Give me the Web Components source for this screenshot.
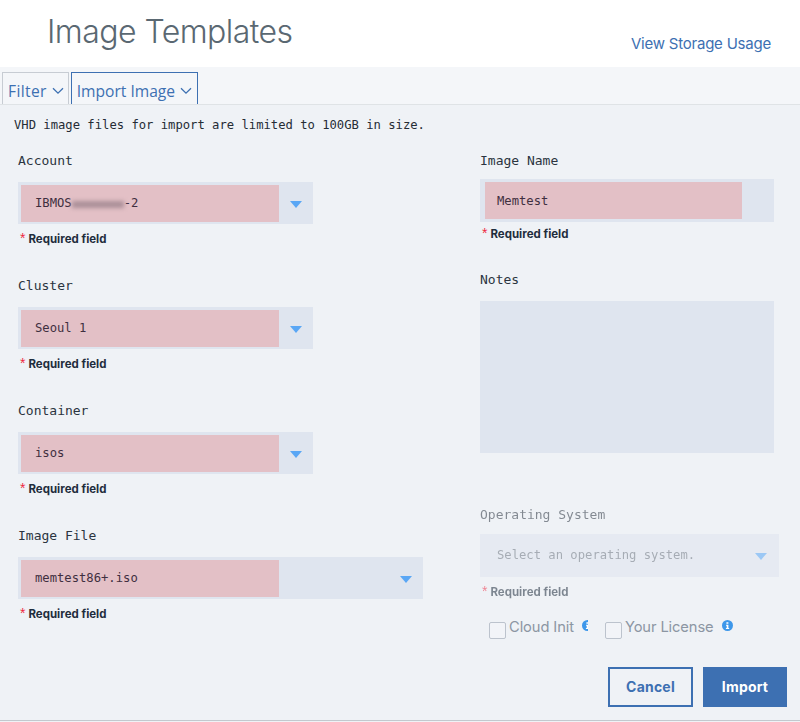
<!DOCTYPE html>
<html>
<head>
<meta charset="utf-8">
<title>Image Templates</title>
<style>
  html, body { margin: 0; padding: 0; background: #eff2f6; }
  body { width: 800px; height: 722px; overflow: hidden; }
</style>
</head>
<body>
<image-page>
  <page-header slot="header" link="View Storage Usage">Image Templates</page-header>
  <page-toolbar slot="toolbar">
    <tool-tab>Filter</tool-tab>
    <tool-tab active>Import Image</tool-tab>
  </page-toolbar>
  <span slot="note">VHD image files for import are limited to 100GB in size.</span>

  <form-field slot="left" label="Account" width="295" fill="258" arrow>IBMOS<blur-mark></blur-mark>-2</form-field>
  <form-field slot="left" label="Cluster" width="295" fill="258" arrow>Seoul 1</form-field>
  <form-field slot="left" label="Container" width="295" fill="258" arrow>isos</form-field>
  <form-field slot="left" label="Image File" width="405" fill="258" arrow>memtest86+.iso</form-field>

  <name-field slot="right" label="Image Name">Memtest</name-field>
  <notes-field slot="right" label="Notes"></notes-field>
  <os-field slot="right" label="Operating System">Select an operating system.</os-field>
  <check-row slot="right">
    <check-item clip>Cloud Init</check-item>
    <check-item>Your License</check-item>
  </check-row>
  <form-actions slot="right">
    <form-button>Cancel</form-button>
    <form-button primary>Import</form-button>
  </form-actions>
</image-page>

<script>
const SANS = '"Inter", "Liberation Sans", sans-serif';
const MONO = '"DejaVu Sans Mono", "Liberation Mono", monospace';

function define(name, html, extra) {
  const template = document.createElement('template');
  template.innerHTML = html;
  customElements.define(name, class extends HTMLElement {
    constructor() {
      super();
      this.attachShadow({ mode: 'open' });
      this.shadowRoot.appendChild(template.content.cloneNode(true));
    }
    connectedCallback() {
      if (extra) extra(this, this.shadowRoot);
    }
  });
}

define('image-page', `
  <style>
    :host { display: block; width: 800px; height: 722px; background: #eff2f6; box-sizing: border-box; }
    .note { height: 46px; box-sizing: border-box; padding: 12px 0 0 14px; font: 12.2px/17px ${MONO}; color: #252c35; white-space: pre; }
    .cols { display: grid; grid-template-columns: 462px 307px; padding-left: 18px; }
    .col { display: flex; flex-direction: column; }
    .end { height: 1px; background: #c3c8ce; margin-top: 13px; }
  </style>
  <slot name="header"></slot>
  <slot name="toolbar"></slot>
  <div class="note"><slot name="note"></slot></div>
  <div class="cols">
    <div class="col"><slot name="left"></slot></div>
    <div class="col"><slot name="right"></slot></div>
  </div>
  <div class="end"></div>
`);

define('page-header', `
  <style>
    :host { display: flex; justify-content: space-between; height: 67px; background: #fff; box-sizing: border-box; padding: 0 29px 0 47px; }
    h1 { margin: 11px 0 0; font: 300 32px/42px ${SANS}; color: #5a6872; letter-spacing: -0.55px; }
    a { margin-top: 34px; font: 400 15px/19px ${SANS}; color: #3d70b2; letter-spacing: -0.22px; }
  </style>
  <h1><slot></slot></h1>
  <a></a>
`, (el, root) => { root.querySelector('a').textContent = el.getAttribute('link'); });

define('page-toolbar', `
  <style>
    :host { display: flex; align-items: flex-end; gap: 2px; height: 38px; box-sizing: border-box; padding-left: 2px; background: #f4f6f9; border-bottom: 1px solid #dfe3e6; }
  </style>
  <slot></slot>
`);

define('tool-tab', `
  <style>
    :host { display: flex; align-items: center; gap: 5px; height: 32px; box-sizing: border-box; padding: 4px 4px 0 5px; border: 1px solid #c7ccd3; border-bottom: 0; font: 400 15.6px/20px "Open Sans", sans-serif; letter-spacing: .35px; color: #3d70b2; background: #f4f6f9; }
    :host([active]) { border-color: #3d70b2; letter-spacing: 0; padding-right: 5px; }
    svg { width: 12px; height: 8px; margin-top: 1px; }
  </style>
  <slot></slot>
  <svg viewBox="0 0 12 8"><path d="M1 1.2l5 5 5-5" fill="none" stroke="#3d70b2" stroke-width="1.3"/></svg>
`);

define('blur-mark', `
  <style>
    :host { display: block; width: 52px; height: 7px; margin-top: 1px; background: #ab8f98; filter: blur(2px); }
  </style>
`);

const ARROW = `<svg viewBox="0 0 12 7"><path d="M0 0h12L6 7z" fill="#5aa7f5"/></svg>`;

define('form-field', `
  <style>
    :host { display: block; height: 125px; }
    label { display: block; font: 13px/20px ${MONO}; color: #2b3440; margin-bottom: 11px; white-space: pre; }
    .box { display: flex; justify-content: space-between; align-items: center; height: 42px; box-sizing: border-box; padding: 3px 0 2px 3px; background: #dfe5ef; }
    .val { display: flex; align-items: center; height: 37px; box-sizing: border-box; padding-left: 14px; background: #e3c0c6; font: 12.2px/17px ${MONO}; color: #3f2f3f; white-space: pre; }
    svg { width: 12px; height: 7px; margin-right: 11px; margin-top: 2px; }
    req-note { margin-top: 8px; }
  </style>
  <label></label>
  <div class="box"><div class="val"><slot></slot></div>${ARROW}</div>
  <req-note></req-note>
`, (el, root) => {
  root.querySelector('label').textContent = el.getAttribute('label');
  root.querySelector('.box').style.width = el.getAttribute('width') + 'px';
  root.querySelector('.val').style.width = el.getAttribute('fill') + 'px';
});

define('req-note', `
  <style>
    :host { display: flex; gap: 3px; height: 14px; align-items: center; font: 700 11.5px/14px ${SANS}; color: #1f2d3d; letter-spacing: 0; white-space: pre; }
    b { color: #ee2a42; font: 400 14px/14px "Liberation Sans", sans-serif; margin: -3px 0 0 2px; }
  </style>
  <b>*</b><span>Required field</span>
`);

define('name-field', `
  <style>
    :host { display: block; height: 119px; }
    label { display: block; font: 13px/20px ${MONO}; color: #2b3440; margin-bottom: 8px; white-space: pre; }
    .box { width: 294px; height: 43px; box-sizing: border-box; padding: 3px 0 3px 5px; background: #dfe5ef; }
    .val { width: 257px; height: 37px; box-sizing: border-box; padding: 1px 0 0 12px; background: #e3c0c6; font: 12.2px/37px ${MONO}; color: #3f2f3f; }
    req-note { margin-top: 5px; }
  </style>
  <label></label>
  <div class="box"><div class="val"><slot></slot></div></div>
  <req-note></req-note>
`, (el, root) => { root.querySelector('label').textContent = el.getAttribute('label'); });

define('notes-field', `
  <style>
    :host { display: block; height: 235px; }
    label { display: block; font: 13px/20px ${MONO}; color: #2b3440; margin-bottom: 11px; }
    .area { width: 294px; height: 152px; background: #dfe5ef; }
  </style>
  <label></label>
  <div class="area"></div>
`, (el, root) => { root.querySelector('label').textContent = el.getAttribute('label'); });

define('os-field', `
  <style>
    :host { display: block; height: 94px; opacity: .55; }
    label { display: block; font: 13px/20px ${MONO}; color: #2b3440; margin-bottom: 9px; white-space: pre; }
    .box { display: flex; justify-content: space-between; align-items: center; width: 299px; height: 43px; box-sizing: border-box; padding-left: 17px; background: #dfe5ef; font: 12.2px/17px ${MONO}; color: #6c7480; white-space: pre; }
    svg { width: 12px; height: 7px; margin-right: 12px; margin-top: 2px; }
    req-note { margin-top: 8px; }
  </style>
  <label></label>
  <div class="box"><span><slot></slot></span>${ARROW}</div>
  <req-note></req-note>
`, (el, root) => { root.querySelector('label').textContent = el.getAttribute('label'); });

define('check-row', `
  <style>
    :host { display: flex; gap: 17px; height: 68px; padding-left: 9px; box-sizing: border-box; }
  </style>
  <slot></slot>
`);

define('check-item', `
  <style>
    :host { display: flex; align-items: flex-start; height: 40px; font: 400 14.7px/20px ${SANS}; color: #8c96a3; letter-spacing: -0.1px; }
    .box { width: 17px; height: 17px; box-sizing: border-box; border: 1px solid #bcc3cd; border-radius: 2px; margin: 23px 3px 0 0; background: #f2f4f8; }
    .txt { margin-top: 18px; white-space: pre; }
    .i { width: 11px; height: 11px; margin: 21px 0 0 8px; overflow: hidden; }
    :host([clip]) .i { width: 6px; }
    svg { display: block; width: 11px; height: 11px; }
  </style>
  <div class="box"></div>
  <span class="txt"><slot></slot></span>
  <div class="i"><svg viewBox="0 0 11 11"><circle cx="5.5" cy="5.5" r="5.5" fill="#3d97ea"/><path d="M4.4 2.2h2v1.6h-2zM4 4.8h2.4v3.2h.8v1H3.9V8h.8V5.8H4z" fill="#fff"/></svg></div>
`);

define('form-actions', `
  <style>
    :host { display: flex; justify-content: flex-end; gap: 10px; }
  </style>
  <slot></slot>
`);

define('form-button', `
  <style>
    :host { display: flex; align-items: center; justify-content: center; width: 85px; height: 40px; box-sizing: border-box; border: 2px solid #3d70b2; font: 700 14px/18px ${SANS}; color: #3d70b2; letter-spacing: .2px; }
    :host([primary]) { width: 84px; background: #3d70b2; color: #fff; }
  </style>
  <slot></slot>
`);
</script>
</body>
</html>
